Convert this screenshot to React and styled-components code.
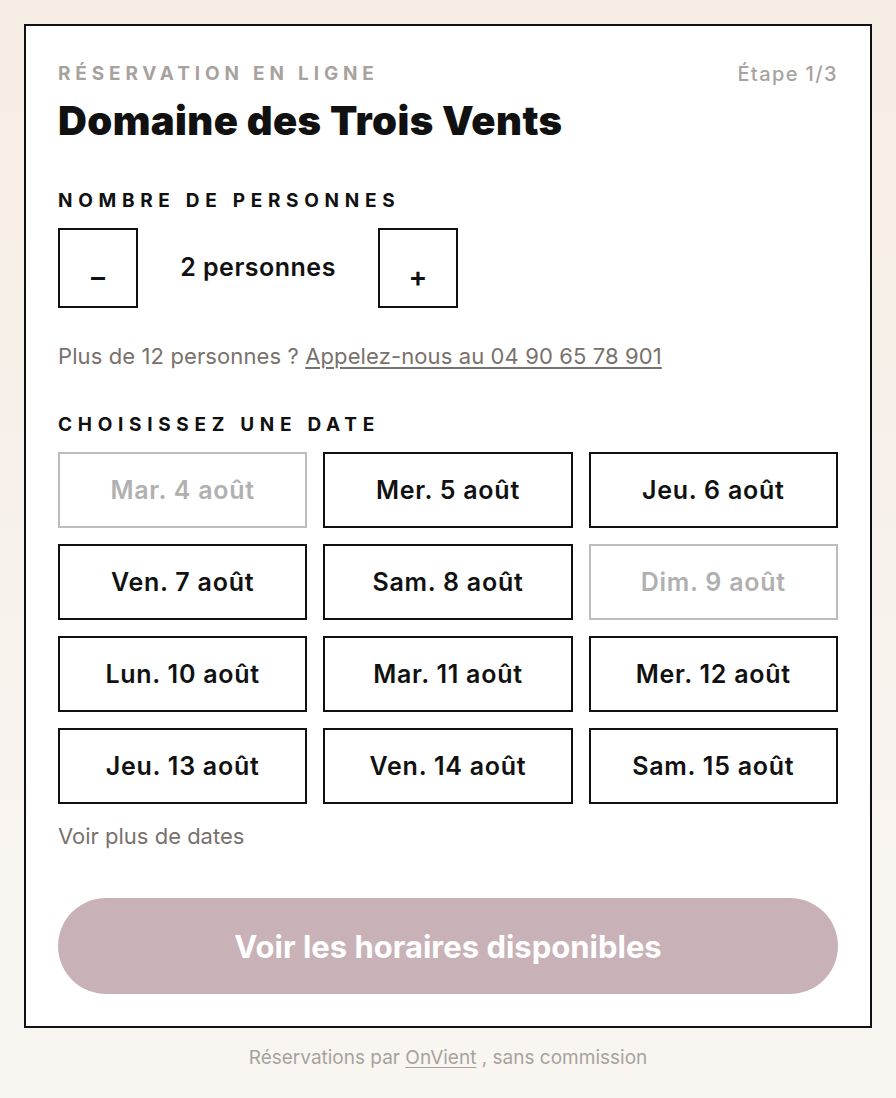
import React, { useState } from "react";
import styled, { createGlobalStyle } from "styled-components";

const Global = createGlobalStyle`
  html, body { margin: 0; padding: 0; }
  body {
    font-family: Inter, "Liberation Sans", Arial, sans-serif;
    background: linear-gradient(180deg, #f6ede5 0%, #f9f6f2 100%);
    min-height: 1098px;
  }
`;

const Page = styled.div`
  padding: 24px 24px 0;
  display: flex;
  flex-direction: column;
`;

const Card = styled.div`
  background: #fff;
  border: 2px solid #111;
  padding: 38px 32px 32px;
  display: flex;
  flex-direction: column;
`;

const TopRow = styled.div`
  display: flex;
  justify-content: space-between;
  align-items: center;
  line-height: 20px;
`;

const Eyebrow = styled.div`
  font-size: 19px;
  font-weight: 700;
  letter-spacing: 0.255em;
  color: #a8a29e;
  text-transform: uppercase;
`;

const Step = styled.div`
  font-size: 20px;
  font-weight: 500;
  color: #a8a29e;
  letter-spacing: 0.07em;
`;

const Title = styled.h1`
  margin: 15px 0 0;
  font-size: 40px;
  line-height: 44px;
  font-weight: 900;
  letter-spacing: 0.01em;
  color: #111;
`;

const SectionLabel = styled.div`
  margin-top: ${(p) => p.$top}px;
  font-size: 19px;
  line-height: 20px;
  font-weight: 700;
  letter-spacing: 0.3em;
  color: #111;
  text-transform: uppercase;
`;

const Stepper = styled.div`
  margin-top: 17px;
  display: flex;
  align-items: center;
`;

const StepBtn = styled.button`
  width: 80px;
  height: 80px;
  border: 2px solid #111;
  background: #fff;
  font-family: inherit;
  font-size: 28px;
  font-weight: 600;
  color: #111;
  padding: 18px 0 0;
  cursor: pointer;
  display: flex;
  align-items: center;
  justify-content: center;
`;

const Count = styled.div`
  width: 240px;
  text-align: center;
  font-size: 25px;
  font-weight: 600;
  color: #111;
  letter-spacing: 0.02em;
  margin-top: -2px;
`;

const Note = styled.p`
  margin: 34px 0 0;
  font-size: 22px;
  line-height: 28px;
  color: #78716c;
  letter-spacing: 0.005em;
  a {
    color: #78716c;
    text-decoration: underline;
    text-underline-offset: 3px;
  }
`;

const Grid = styled.div`
  margin-top: 17px;
  display: grid;
  grid-template-columns: repeat(3, 1fr);
  gap: 16px;
`;

const DateBtn = styled.button`
  height: 76px;
  background: #fff;
  border: 2px solid ${(p) => (p.$disabled ? "#bdbdbd" : "#111")};
  color: ${(p) => (p.$disabled ? "#b0b0b0" : "#111")};
  font-family: inherit;
  font-size: 25px;
  font-weight: 600;
  letter-spacing: 0.03em;
  cursor: ${(p) => (p.$disabled ? "default" : "pointer")};
`;

const More = styled.div`
  margin-top: 18px;
  font-size: 22px;
  line-height: 28px;
  color: #78716c;
`;

const Cta = styled.button`
  margin-top: 48px;
  height: 96px;
  border: none;
  border-radius: 48px;
  background: #c8b2b7;
  color: #fff;
  font-family: inherit;
  font-size: 31px;
  font-weight: 700;
`;

const Footer = styled.div`
  text-align: center;
  padding: 20px 0;
  font-size: 19px;
  line-height: 20px;
  color: #a8a29e;
  a {
    color: #a8a29e;
    text-decoration: underline;
    text-underline-offset: 3px;
  }
`;

const dates = [
  ["Mar. 4 août", true],
  ["Mer. 5 août"],
  ["Jeu. 6 août"],
  ["Ven. 7 août"],
  ["Sam. 8 août"],
  ["Dim. 9 août", true],
  ["Lun. 10 août"],
  ["Mar. 11 août"],
  ["Mer. 12 août"],
  ["Jeu. 13 août"],
  ["Ven. 14 août"],
  ["Sam. 15 août"],
];

export default function App() {
  const [n, setN] = useState(2);
  return (
    <>
      <Global />
      <Page>
        <Card>
          <TopRow>
            <Eyebrow>Réservation en ligne</Eyebrow>
            <Step>Étape 1/3</Step>
          </TopRow>
          <Title>Domaine des Trois Vents</Title>
          <SectionLabel $top={48}>Nombre de personnes</SectionLabel>
          <Stepper>
            <StepBtn onClick={() => setN(Math.max(1, n - 1))}>–</StepBtn>
            <Count>{n} personnes</Count>
            <StepBtn onClick={() => setN(Math.min(12, n + 1))}>+</StepBtn>
          </Stepper>
          <Note>
            Plus de 12 personnes ? <a href="#">Appelez-nous au 04 90 65 78 901</a>
          </Note>
          <SectionLabel $top={45}>Choisissez une date</SectionLabel>
          <Grid>
            {dates.map(([label, dis]) => (
              <DateBtn key={label} $disabled={dis}>
                {label}
              </DateBtn>
            ))}
          </Grid>
          <More>Voir plus de dates</More>
          <Cta>Voir les horaires disponibles</Cta>
        </Card>
        <Footer>
          Réservations par <a href="#">OnVient</a> , sans commission
        </Footer>
      </Page>
    </>
  );
}
